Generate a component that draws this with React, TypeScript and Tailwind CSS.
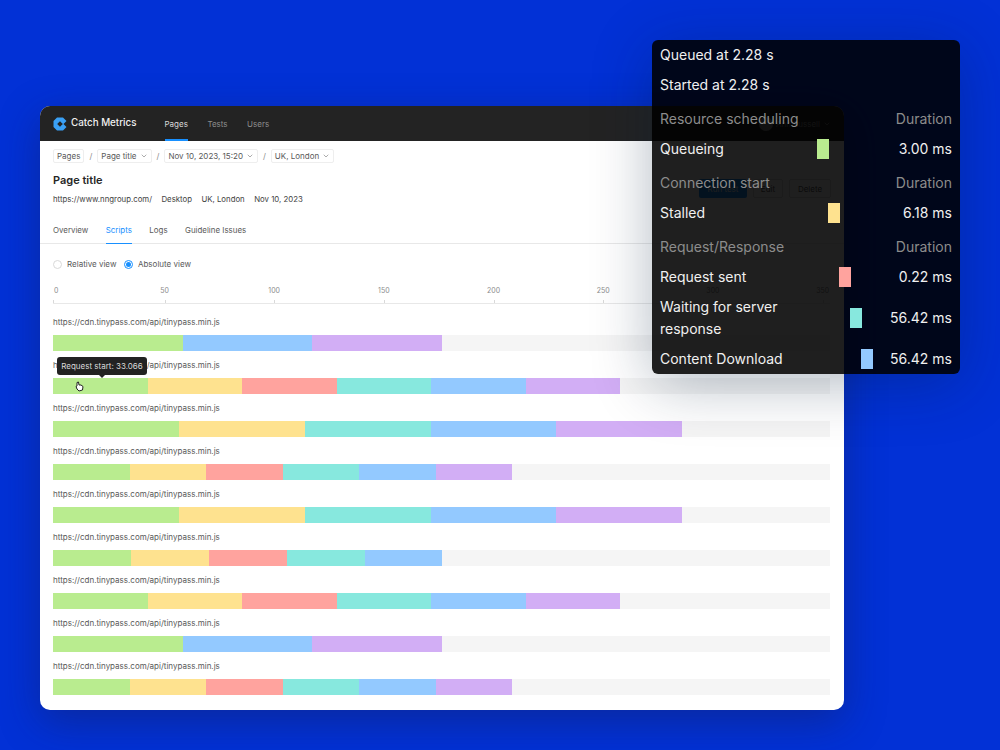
import { ChevronDown } from 'lucide-react';

const GREEN = '#b9ec8f';
const YELLOW = '#fee28f';
const RED = '#ffa39e';
const TEAL = '#87e8de';
const BLUE = '#93c9ff';
const PURPLE = '#d2aef5';

const rowA = [[GREEN, 130], [BLUE, 129], [PURPLE, 130]];
const rowB = [[GREEN, 95], [YELLOW, 94], [RED, 95], [TEAL, 94], [BLUE, 95], [PURPLE, 94]];
const rowC = [[GREEN, 126], [YELLOW, 126], [TEAL, 126], [BLUE, 125], [PURPLE, 126]];
const rowD = [[GREEN, 77], [YELLOW, 76], [RED, 77], [TEAL, 76], [BLUE, 77], [PURPLE, 76]];
const rowE = [[GREEN, 78], [YELLOW, 78], [RED, 78], [TEAL, 78], [BLUE, 77]];

const rows = [rowA, rowB, rowC, rowD, rowC, rowE, rowB, rowA, rowD] as [string, number][][];

const ticks = ['0', '50', '100', '150', '200', '250', '300', '350'];

function Chip({ label, caret = true }: { label: string; caret?: boolean }) {
  return (
    <div className="flex h-[14px] items-center gap-[3px] rounded-[2px] border border-[#eeeeee] px-[3px] text-[8px] text-[#595959]">
      {label}
      {caret && <ChevronDown className="h-[8px] w-[8px]" strokeWidth={1.5} />}
    </div>
  );
}

function Timing({ label, value, offset, color }: { label: string; value: string; offset: number; color: string }) {
  return (
    <div className="flex items-center py-1">
      <div className="w-[157px] shrink-0 leading-[22px] text-[#f0f0f0]">{label}</div>
      <div className="h-[20px] w-[12px] shrink-0" style={{ marginLeft: offset, backgroundColor: color }} />
      <div className="flex-1 text-right leading-[22px] text-[#f0f0f0]">{value}</div>
    </div>
  );
}

function Group({ label }: { label: string }) {
  return (
    <div className="mt-1 flex justify-between py-1 leading-[22px] text-[#8c8c8c]">
      <span>{label}</span>
      <span>Duration</span>
    </div>
  );
}

export default function App() {
  return (
    <div className="relative h-[750px] w-[1000px] overflow-hidden bg-[#0231d6] pl-[40px] pt-[106px] font-['Inter',sans-serif]">
      {/* Main window */}
      <div className="relative h-[604px] w-[804px] overflow-hidden rounded-[10px] bg-white shadow-[0_12px_40px_rgba(20,30,90,0.45)]">
        <div className="flex h-[35px] items-center bg-[#232323] pl-[13px] pr-[13px]">
          <svg width="14" height="14" viewBox="0 0 14 14">
            <path d="M4 0.5H10L13.5 4L10.5 7L13.5 10L10 13.5H4L0.5 10V4Z" fill="#3aa0f5" />
            <path d="M7 4.2L9.8 7L7 9.8L4.2 7Z" fill="#232323" />
          </svg>
          <span className="ml-[4px] text-[9.8px] font-medium text-[#f0f0f0]">Catch Metrics</span>
          <div className="ml-[28px] flex h-full gap-[19.5px] text-[8px]">
            <div className="flex items-center border-b-2 border-[#1890ff] pt-[2px] text-[#d9d9d9]">Pages</div>
            <div className="flex items-center text-[#8c8c8c]">Tests</div>
            <div className="flex items-center text-[#8c8c8c]">Users</div>
          </div>
          <div className="ml-auto flex items-center gap-[3px] text-[8px] text-[#8c8c8c]">
            <div className="h-[14px] w-[14px] rounded-full bg-[#8c8c8c]" />
            <span>Ann Russell</span>
            <ChevronDown className="h-[8px] w-[8px]" />
          </div>
        </div>

        <div className="flex items-start justify-between px-[13px] pt-[8px]">
          <div>
            <div className="flex items-center gap-[5px] text-[8px] text-[#8c8c8c]">
              <Chip label="Pages" caret={false} />
              <span>/</span>
              <Chip label="Page title" />
              <span>/</span>
              <Chip label="Nov 10, 2023, 15:20" />
              <span>/</span>
              <Chip label="UK, London" />
            </div>
            <div className="mt-[8px] text-[11px] font-semibold leading-[18px] text-[#262626]">Page title</div>
            <div className="mt-[4px] flex gap-[9.5px] text-[7.8px] leading-[12px] text-[#434343]">
              <span>https://www.nngroup.com/</span>
              <span>Desktop</span>
              <span>UK, London</span>
              <span>Nov 10, 2023</span>
            </div>
          </div>
          <div className="mt-[30px] flex items-center gap-[6px] text-[8px]">
            <div className="flex h-[19px] w-[48px] items-center justify-center rounded-[2px] bg-[#1890ff] text-white">Run test</div>
            <div className="flex h-[19px] w-[30px] items-center justify-center rounded-[2px] border border-[#d9d9d9] text-[#595959]">Edit</div>
            <div className="flex h-[19px] w-[42px] items-center justify-center rounded-[2px] border border-[#d9d9d9] text-[#595959]">Delete</div>
          </div>
        </div>

        <div className="mt-[13px] flex h-[26px] gap-[17.5px] border-b border-[#e8e8e8] px-[13px] text-[7.9px] text-[#595959]">
          <div className="pt-[7px]">Overview</div>
          <div className="-mb-px border-b border-[#1890ff] pt-[7px] text-[#1890ff]">Scripts</div>
          <div className="pt-[7px]">Logs</div>
          <div className="pt-[7px]">Guideline Issues</div>
        </div>

        <div className="mt-[15px] flex items-center px-[13px] text-[8px] leading-[10px] text-[#595959]">
          <div className="h-[9px] w-[9px] rounded-full border border-[#d9d9d9]" />
          <span className="ml-[5px]">Relative view</span>
          <div className="ml-[8px] flex h-[9px] w-[9px] items-center justify-center rounded-full border border-[#1890ff]">
            <div className="h-[5px] w-[5px] rounded-full bg-[#1890ff]" />
          </div>
          <span className="ml-[4.5px]">Absolute view</span>
        </div>

        <div className="mx-[13px] mt-[17px] flex h-[18px] w-[777px] items-start border-b border-[#e8e8e8]">
          {ticks.map((t) => (
            <div
              key={t}
              className={
                t === '0'
                  ? 'relative h-full w-[111.5px] shrink-0 text-[7px] leading-[10px] text-[#8c8c8c]'
                  : 'relative h-full w-[109.7px] shrink-0 text-[7px] leading-[10px] text-[#8c8c8c]'
              }
            >
              <span className={t === '0' ? 'ml-[1px] inline-block' : 'inline-block -translate-x-1/2'}>{t}</span>
              <div className="absolute bottom-0 left-0 h-[3px] w-px bg-[#d9d9d9]" />
            </div>
          ))}
        </div>

        <div className="mt-[12px] flex flex-col gap-[8px] px-[13px]">
          {rows.map((row, i) => (
            <div key={i}>
              <div className="text-[8px] leading-[12px] text-[#595959]">https://cdn.tinypass.com/api/tinypass.min.js</div>
              <div className="mt-[7px] flex h-[16px] w-[777px] bg-[#f5f5f5]">
                {row.map(([color, width], j) => (
                  <div key={j} style={{ width, backgroundColor: color }} />
                ))}
              </div>
            </div>
          ))}
        </div>

        {/* Hover tooltip on the second row */}
        <div className="absolute left-[17px] top-[251px] flex h-[18px] w-[90px] items-center justify-center rounded-[3px] bg-[#222222] text-[8px] text-[#d9d9d9]">
          Request start: 33.066
          <div className="absolute -bottom-[3px] left-[41px] h-0 w-0 border-x-[4px] border-t-[4px] border-x-transparent border-t-[#222222]" />
        </div>
        <svg className="absolute left-[35px] top-[275px]" width="9" height="11" viewBox="0 0 9 11">
          <path d="M2 1.5L3.5 1L4 4L6 4L8 5.5L7.5 9L4 10L2 8L1 5.5L2 5Z" fill="#fff" stroke="#222" strokeWidth="1" />
        </svg>
      </div>

      {/* Timing popover */}
      <div className="absolute left-[652px] top-[40px] h-[334px] w-[308px] rounded-[6px] bg-black/[0.88] px-[8px] text-[14px] shadow-[0_10px_60px_rgba(0,30,60,0.3)]">
        <div className="py-1 leading-[22px] text-[#f0f0f0]">Queued at 2.28 s</div>
        <div className="py-1 leading-[22px] text-[#f0f0f0]">Started at 2.28 s</div>
        <Group label="Resource scheduling" />
        <Timing label="Queueing" value="3.00 ms" offset={0} color={GREEN} />
        <Group label="Connection start" />
        <Timing label="Stalled" value="6.18 ms" offset={11} color={YELLOW} />
        <Group label="Request/Response" />
        <Timing label="Request sent" value="0.22 ms" offset={22} color={RED} />
        <Timing label="Waiting for server response" value="56.42 ms" offset={33} color={TEAL} />
        <Timing label="Content Download" value="56.42 ms" offset={44} color={BLUE} />
      </div>
    </div>
  );
}
